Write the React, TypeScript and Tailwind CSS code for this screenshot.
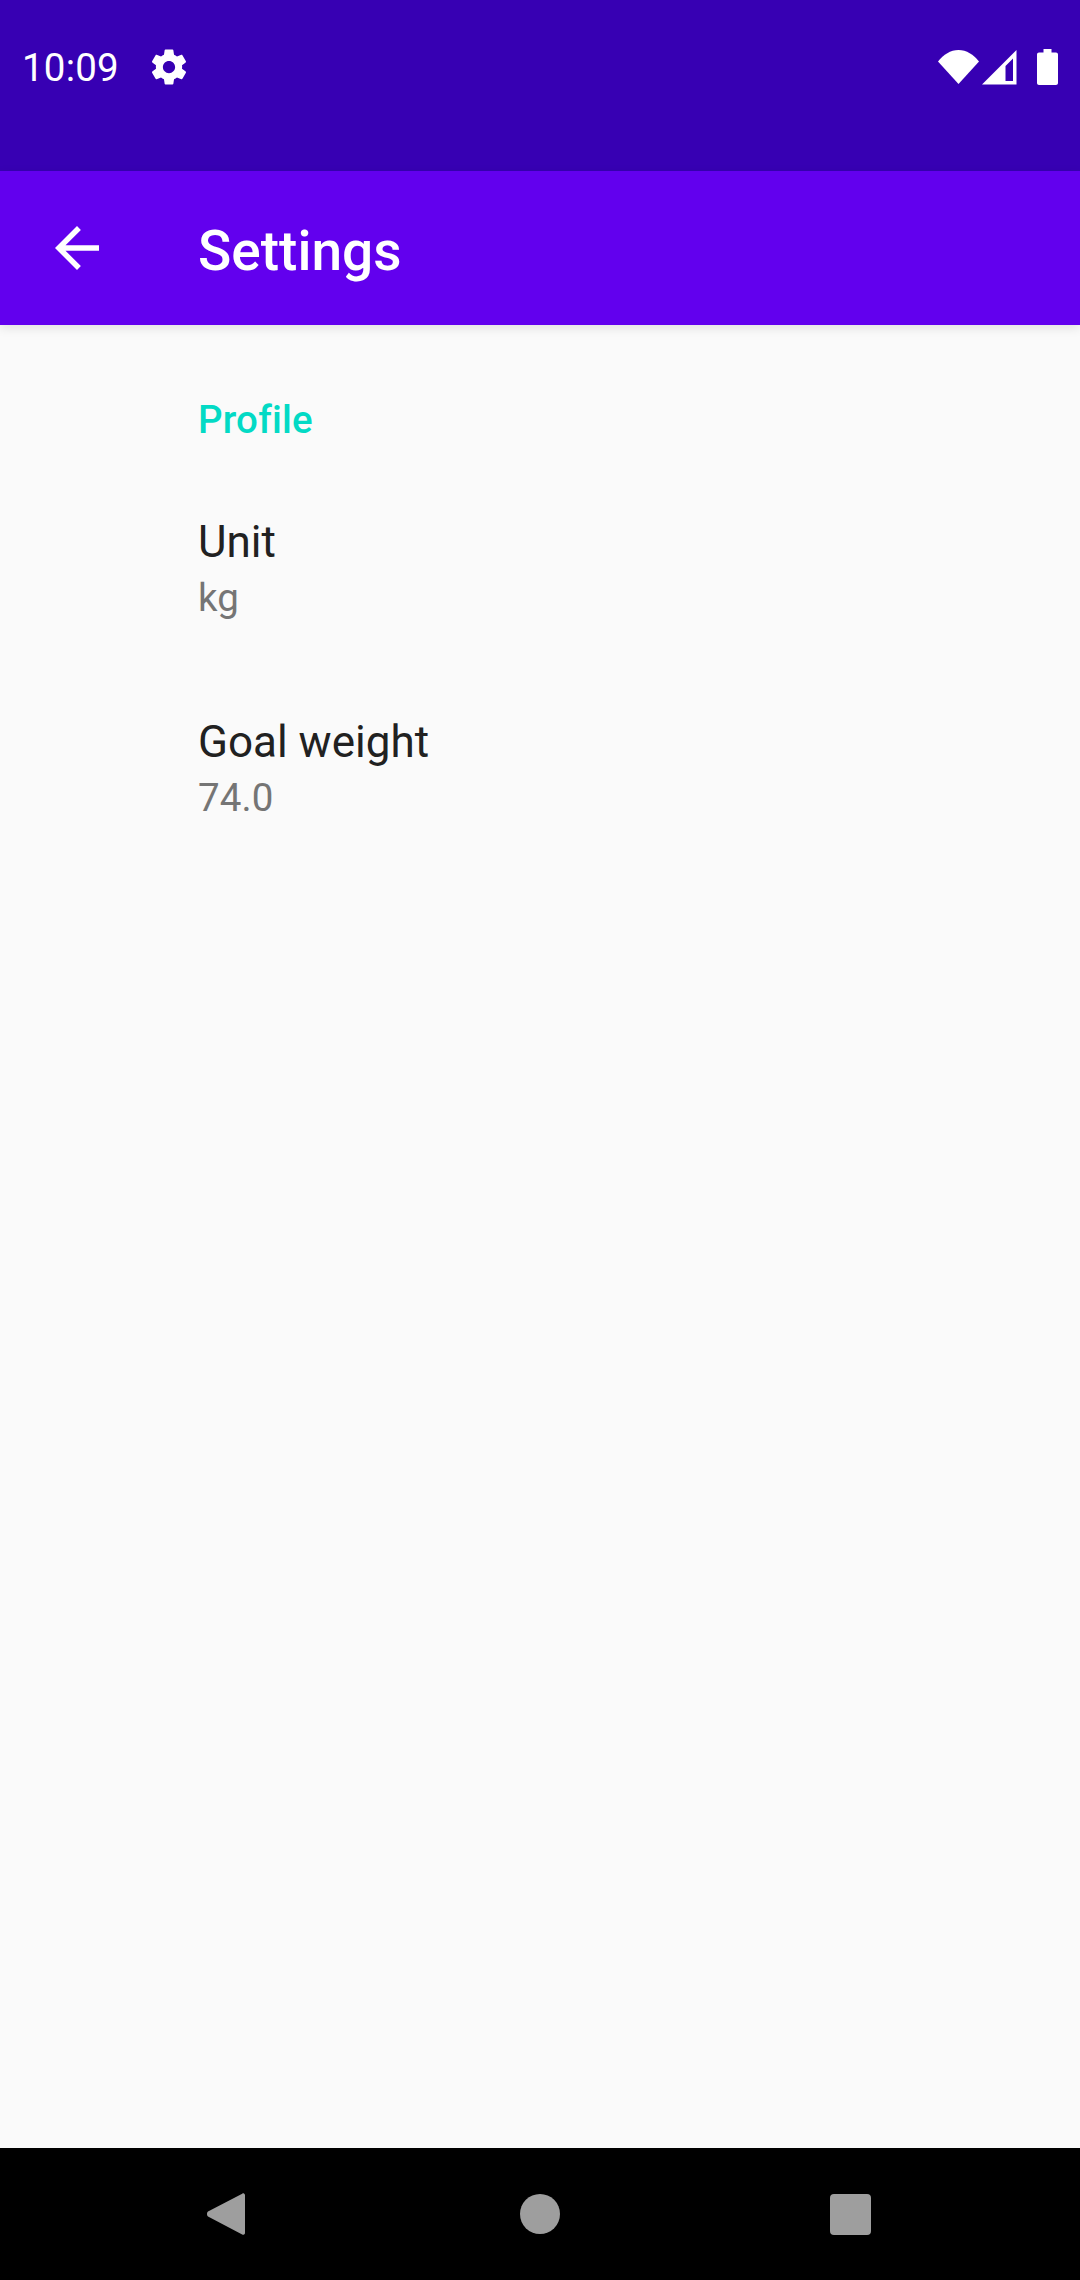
import React from 'react';

const roboto = { fontFamily: 'Roboto, sans-serif' };

const GearIcon = () => (
  <svg width="42" height="42" viewBox="0 0 24 24" fill="#fff">
    <path d="M19.43 12.98c.04-.32.07-.64.07-.98s-.03-.66-.07-.98l2.11-1.65c.19-.15.24-.42.12-.64l-2-3.46c-.12-.22-.39-.3-.61-.22l-2.49 1c-.52-.4-1.08-.73-1.69-.98l-.38-2.65C14.46 2.18 14.25 2 14 2h-4c-.25 0-.46.18-.49.42l-.38 2.65c-.61.25-1.17.59-1.69.98l-2.49-1c-.23-.09-.49 0-.61.22l-2 3.46c-.13.22-.07.49.12.64l2.11 1.65c-.04.32-.07.65-.07.98s.03.66.07.98l-2.11 1.65c-.19.15-.24.42-.12.64l2 3.46c.12.22.39.3.61.22l2.49-1c.52.4 1.08.73 1.69.98l.38 2.65c.03.24.24.42.49.42h4c.25 0 .46-.18.49-.42l.38-2.65c.61-.25 1.17-.59 1.69-.98l2.49 1c.23.09.49 0 .61-.22l2-3.46c.12-.22.07-.49-.12-.64l-2.11-1.65zM12 15.5c-1.93 0-3.5-1.57-3.5-3.5s1.57-3.5 3.5-3.5 3.5 1.57 3.5 3.5-1.57 3.5-3.5 3.5z" />
  </svg>
);

const WifiIcon = () => (
  <svg width="41" height="34" viewBox="0 0 41 34" fill="#fff">
    <path d="M0 11.500C5.500 4.500 12.500 0 20.500 0S35.500 4.500 41 11.500L20.500 34z" />
  </svg>
);

const SignalIcon = () => (
  <svg width="35" height="35" viewBox="0 0 35 35" fill="#fff">
    <path fillRule="evenodd" d="M0 34.500L34.500 0v34.500zM23.500 16v15h7.500V8.500z" />
  </svg>
);

const BatteryIcon = () => (
  <svg width="21" height="36" viewBox="0 0 21 36" fill="#fff">
    <path d="M6.500 0h8v3.500h4.500c1.100 0 2 .9 2 2V34c0 1.100-.9 2-2 2H2c-1.100 0-2-.9-2-2V5.500c0-1.100.9-2 2-2h4.500z" />
  </svg>
);

const BackArrow = () => (
  <svg width="66" height="66" viewBox="0 0 24 24" fill="#fff">
    <path d="M20 11H7.830l5.590-5.590L12 4l-8 8 8 8 1.410-1.410L7.830 13H20v-2z" />
  </svg>
);

const Preference = ({ title, summary, className }: { title: string; summary: string; className: string }) => (
  <div className={className}>
    <div className="text-[44px] leading-[59px] text-[#212121]">{title}</div>
    <div className="text-[38.5px] leading-[52px] tracking-[0.1px] text-[#757575]">{summary}</div>
  </div>
);

export default function App() {
  return (
    <div className="flex h-[2280px] w-[1080px] flex-col overflow-hidden bg-[#fafafa]" style={roboto}>
      <div className="flex h-[171px] shrink-0 items-start bg-[#3700b3] pt-[45px] text-white">
        <span className="ml-[22px] text-[38.5px] leading-[46px] tracking-[0.2px]">10:09</span>
        <div className="ml-[29px] mt-[1px]">
          <GearIcon />
        </div>
        <div className="ml-auto mt-[5px] flex items-start">
          <WifiIcon />
          <div className="ml-[3px]">
            <SignalIcon />
          </div>
          <div className="ml-[20px] mr-[22px] -mt-[1px]">
            <BatteryIcon />
          </div>
        </div>
      </div>

      <div className="z-10 flex h-[154px] shrink-0 items-center bg-[#6200ee] shadow-[0_3px_10px_rgba(0,0,0,0.1)]">
        <div className="ml-[44px]">
          <BackArrow />
        </div>
        <h1 className="ml-[88px] mt-[6px] text-[55px] font-medium leading-[66px] text-white">Settings</h1>
      </div>

      <main className="flex-1 pl-[198px]">
        <div className="mt-[72px] text-[38.5px] font-medium leading-[46px] tracking-[0.2px] text-[#03dac5]">Profile</div>
        <Preference title="Unit" summary="kg" className="mt-[70px]" />
        <Preference title="Goal weight" summary="74.0" className="mt-[89px]" />
      </main>

      <nav className="relative h-[132px] shrink-0 bg-black">
        <div className="flex h-full items-start justify-center pt-[44px] pr-[2px]">
          <svg width="38" height="44" viewBox="0 0 38 44" fill="#9e9e9e" className="mr-[275px]">
            <path d="M37 1.500c.6.300 1 .900 1 1.500v38c0 .7-.4 1.300-1 1.600-.6.300-1.300.2-1.800-.2L1 24.500c-.6-.5-1-1.500-1-2.500s.4-2 1-2.500L35.200 1.700c.5-.4 1.200-.5 1.800-.2z" />
          </svg>
          <div className="mt-[2px] h-[40px] w-[40px] rounded-full bg-[#9e9e9e]" />
          <div className="ml-[270px] mt-[2px] h-[41px] w-[41px] rounded-[4px] bg-[#9e9e9e]" />
        </div>
      </nav>
    </div>
  );
}
